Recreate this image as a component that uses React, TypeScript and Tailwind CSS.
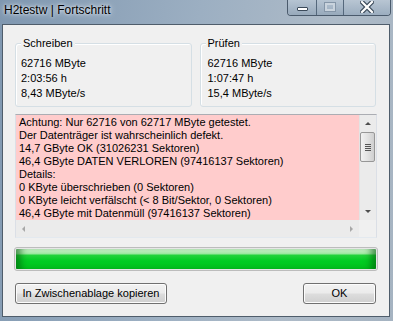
import React from "react";

const LINES = [
  "Achtung: Nur 62716 von 62717 MByte getestet.",
  "Der Datenträger ist wahrscheinlich defekt.",
  "14,7 GByte OK (31026231 Sektoren)",
  "46,4 GByte DATEN VERLOREN (97416137 Sektoren)",
  "Details:",
  "0 KByte überschrieben (0 Sektoren)",
  "0 KByte leicht verfälscht (< 8 Bit/Sektor, 0 Sektoren)",
  "46,4 GByte mit Datenmüll (97416137 Sektoren)",
];

function GroupBox({ title, rows, pad }: { title: string; rows: string[]; pad: string }) {
  return (
    <div className="relative flex-1 rounded-[3px] border border-[#d5dfe5] shadow-[inset_1px_1px_0_#fff]">
      <span className="absolute -top-[8px] left-[5px] bg-[#f0f0f0] px-[2px] text-[11px] leading-[15px]">
        {title}
      </span>
      <div className={`flex flex-col pt-[12px] pb-[5px] ${pad}`}>
        {rows.map((r) => (
          <div key={r} className="h-[15px] text-[11px] leading-[15px]">
            {r}
          </div>
        ))}
      </div>
    </div>
  );
}

function Arrow({ dir }: { dir: "up" | "down" | "left" | "right" }) {
  const pts = {
    up: "1,5 4,2 7,5",
    down: "1,2 4,5 7,2",
    left: "5,1 2,4 5,7",
    right: "3,1 6,4 3,7",
  }[dir];
  const dim = dir === "left" || dir === "right";
  return (
    <svg width="8" height="8" viewBox="0 0 8 8">
      <polygon points={pts} fill={dim ? "#a8a8a8" : "#4d4d4d"} />
    </svg>
  );
}

function WinButton({ label, className }: { label: string; className: string }) {
  return (
    <button
      type="button"
      className={`h-[21px] rounded-[3px] border border-[#707070] bg-[linear-gradient(#f2f2f2_0%,#ebebeb_48%,#dddddd_52%,#cfcfcf_100%)] text-[11px] leading-[19px] text-black shadow-[inset_0_0_0_1px_#fcfcfc] ${className}`}
    >
      {label}
    </button>
  );
}

export default function App() {
  return (
    <div
      className="flex h-[321px] w-[393px] flex-col overflow-hidden bg-[linear-gradient(100deg,#7f97b0_0%,#9cafc2_45%,#aebbc8_75%,#a5b3c1_100%)] text-black"
      style={{ fontFamily: '"Liberation Sans", Arial, sans-serif' }}
    >
      {/* title bar */}
      <div className="flex h-[24px] items-start">
        <div className="flex-1 pl-[4px] pt-[3px] text-[12px] leading-[15px] [text-shadow:0_0_6px_#e8eef5,0_0_3px_#e8eef5]">
          H2testw | Fortschritt
        </div>
        <div className="-mt-px mr-[2px] flex h-[17px] overflow-hidden rounded-b-[4px] border border-t-0 border-[#4a5a6c] shadow-[inset_0_0_0_1px_rgba(255,255,255,0.35)]">
          <div className="flex w-[29px] items-center justify-center border-r border-[#55687c] bg-[linear-gradient(#b8c6d4,#97a9bb)]">
            <div className="mt-[3px] h-[4px] w-[11px] rounded-[1px] border border-[#3b4a5a] bg-white" />
          </div>
          <div className="flex w-[27px] items-center justify-center border-r border-[#55687c] bg-[linear-gradient(#b8c6d4,#97a9bb)]">
            <div className="h-[8px] w-[10px] border-2 border-[#c9d3dd] outline outline-1 outline-[#8596a8]" />
          </div>
          <div className="flex w-[46px] items-center justify-center bg-[linear-gradient(#bac7d4,#9badbf)]">
            <svg width="14" height="12" viewBox="0 0 14 12">
              <path d="M2 1 L12 11 M12 1 L2 11" stroke="#3b4a5a" strokeWidth="4.5" strokeLinecap="square" />
              <path d="M2 1 L12 11 M12 1 L2 11" stroke="#ffffff" strokeWidth="2.2" strokeLinecap="square" />
            </svg>
          </div>
        </div>
      </div>

      {/* client area */}
      <div className="ml-[2px] mr-[3px] flex h-[293px] flex-col border border-[#4f5d6b] bg-[#f0f0f0] px-[12px]">
        <div className="mt-[18px] flex gap-[8px] pr-[1px]">
          <GroupBox title="Schreiben" rows={["62716 MByte", "2:03:56 h", "8,43 MByte/s"]} pad="pl-[5px]" />
          <GroupBox title="Prüfen" rows={["62716 MByte", "1:07:47 h", "15,4 MByte/s"]} pad="pl-[7px]" />
        </div>

        {/* text box */}
        <div className="mt-[7px] flex h-[124px] flex-col border border-[#abadb3] border-x-[#dbdfe6] border-b-[#e3e9ef]">
          <div className="flex h-[105px]">
            <div className="flex-1 overflow-hidden bg-[#ffcccc] pl-[3px] pt-px">
              {LINES.map((l) => (
                <div key={l} className="h-[13px] whitespace-nowrap text-[11px] leading-[13px]">
                  {l}
                </div>
              ))}
            </div>
            <div className="flex w-[17px] flex-col bg-[#ebebeb] shadow-[inset_1px_0_0_#e3e3e3]">
              <div className="flex h-[17px] items-center justify-center">
                <Arrow dir="up" />
              </div>
              <div className="mx-px flex h-[30px] flex-col items-center justify-center gap-[1px] rounded-[2px] border border-[#979797] bg-[linear-gradient(90deg,#f2f2f2,#e2e2e2_50%,#cfcfcf)]">
                <div className="h-px w-[6px] bg-[#555]" />
                <div className="h-px w-[6px] bg-[#555]" />
                <div className="h-px w-[6px] bg-[#555]" />
                <div className="h-px w-[6px] bg-[#555]" />
              </div>
              <div className="flex-1" />
              <div className="flex h-[17px] items-center justify-center">
                <Arrow dir="down" />
              </div>
            </div>
          </div>
          <div className="flex h-[17px]">
            <div className="flex flex-1 items-center justify-between bg-[#ebebeb] px-[4px]">
              <Arrow dir="left" />
              <Arrow dir="right" />
            </div>
            <div className="w-[17px] bg-[#f0f0f0]" />
          </div>
        </div>

        {/* progress bar */}
        <div className="-mx-px mt-[9px] h-[24px] rounded-[3px] border border-[#bcbcbc] bg-[#e6e6e6] p-px">
          <div className="h-full rounded-[1px] bg-[linear-gradient(#d2f8d2_0%,#a6eba8_22%,#22d23a_32%,#00cc22_60%,#00c41f_100%)] shadow-[inset_9px_0_7px_-4px_rgba(0,90,10,0.6),inset_-9px_0_7px_-4px_rgba(0,90,10,0.6)]" />
        </div>

        {/* buttons */}
        <div className="mt-[12px] flex justify-between pr-px">
          <WinButton label="In Zwischenablage kopieren" className="w-[152px]" />
          <WinButton label="OK" className="w-[73px]" />
        </div>
      </div>
    </div>
  );
}
